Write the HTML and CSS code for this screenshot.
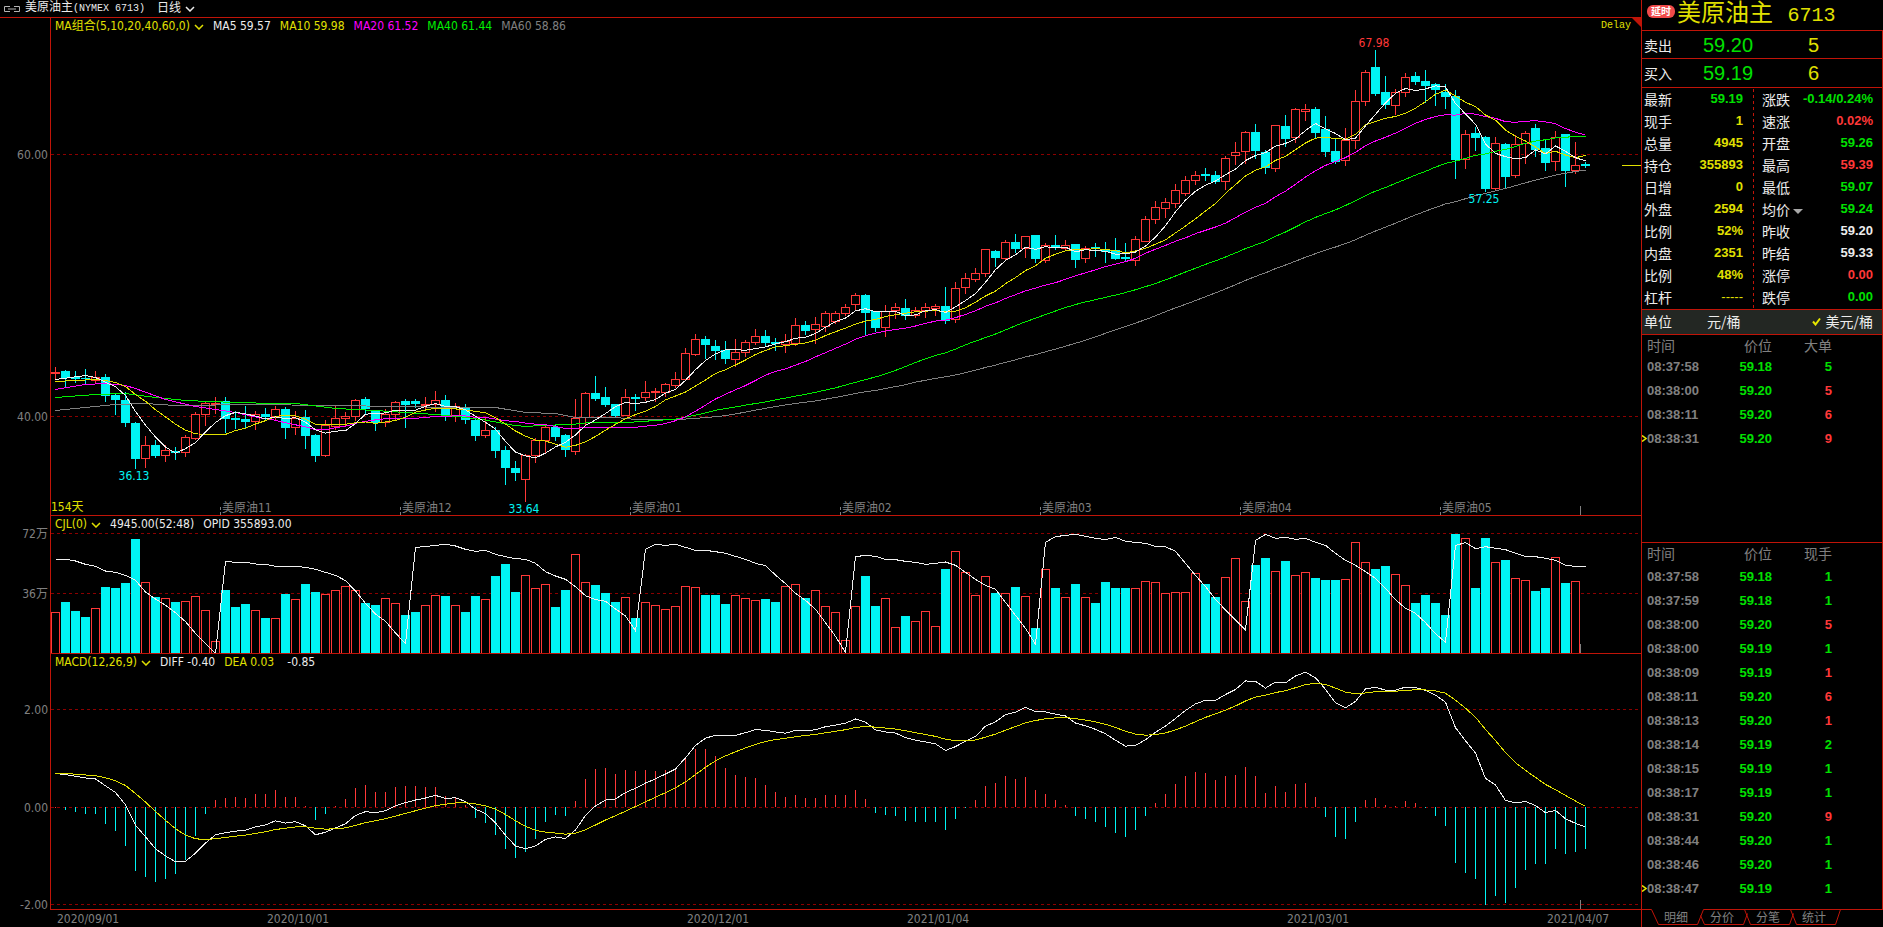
FILE: index.html
```html
<!DOCTYPE html>
<html lang="zh-CN">
<head>
<meta charset="utf-8">
<title>美原油主 6713</title>
<link rel="stylesheet" href="styles.css">
</head>
<body>
<div class="app">
  <main class="chart">
    <header class="topbar">
      <svg class="link-icon" viewBox="0 0 16 6" width="16" height="6"><path d="M6 .5H.5v5H6M10 .5h5.5v5H10M4 3h8" fill="none" stroke="#b4b4b4"/></svg>
      <span>美原油主<span class="mono">(NYMEX 6713)</span></span>
      <button class="period" type="button">日线<svg class="chev" viewBox="0 0 10 6" width="10" height="6"><path d="M1 1l4 4 4-4"/></svg></button>
    </header>
    <section class="pane pane-price">
      <div class="axis" id="axis-price"></div>
      <div class="plot">
        <svg class="drawing" id="price" viewBox="51 18 1590 497" preserveAspectRatio="none"></svg>
        <div class="legend">
          <button type="button" class="yellow">MA组合(5,10,20,40,60,0)<svg class="chev" viewBox="0 0 10 6" width="10" height="6"><path d="M1 1l4 4 4-4"/></svg></button>
          <span class="white">MA5 59.57</span><span class="yellow">MA10 59.98</span><span class="magenta">MA20 61.52</span><span class="lime">MA40 61.44</span><span class="gray">MA60 58.86</span>
        </div>
        <span class="delay mono">Delay</span>
        <span class="corner"></span>
        <span class="days">154天</span>
        <div id="price-notes"></div>
      </div>
    </section>
    <section class="pane pane-volume">
      <div class="axis" id="axis-volume"></div>
      <div class="plot">
        <svg class="drawing" id="volume" viewBox="51 516 1590 137" preserveAspectRatio="none"></svg>
        <div class="legend">
          <button type="button" class="yellow">CJL(0)<svg class="chev" viewBox="0 0 10 6" width="10" height="6"><path d="M1 1l4 4 4-4"/></svg></button>
          <span class="white">4945.00(52:48)</span><span class="white">OPID 355893.00</span>
        </div>
      </div>
    </section>
    <section class="pane pane-macd">
      <div class="axis" id="axis-macd"></div>
      <div class="plot">
        <svg class="drawing" id="macd" viewBox="51 654 1590 255" preserveAspectRatio="none"></svg>
        <div class="legend">
          <button type="button" class="yellow">MACD(12,26,9)<svg class="chev" viewBox="0 0 10 6" width="10" height="6"><path d="M1 1l4 4 4-4"/></svg></button>
          <span class="white">DIFF -0.40</span><span class="yellow">DEA 0.03</span><span class="white last">-0.85</span>
        </div>
      </div>
    </section>
    <footer class="dates"><div class="date-track" id="dates"></div></footer>
  </main>

  <aside class="quote">
    <h1 class="title"><span class="badge">延时</span><span>美原油主 <span class="code">6713</span></span></h1>
    <div class="quote-body">
      <div class="order"><span>卖出</span><b class="green">59.20</b><b class="yellow">5</b></div>
      <div class="order"><span>买入</span><b class="green">59.19</b><b class="yellow">6</b></div>
      <div class="stats">
        <dl>
          <div><dt>最新</dt><dd class="green">59.19</dd></div>
          <div><dt>现手</dt><dd class="yellow">1</dd></div>
          <div><dt>总量</dt><dd class="yellow">4945</dd></div>
          <div><dt>持仓</dt><dd class="yellow">355893</dd></div>
          <div><dt>日增</dt><dd class="yellow">0</dd></div>
          <div><dt>外盘</dt><dd class="yellow">2594</dd></div>
          <div><dt>比例</dt><dd class="yellow">52%</dd></div>
          <div><dt>内盘</dt><dd class="yellow">2351</dd></div>
          <div><dt>比例</dt><dd class="yellow">48%</dd></div>
          <div><dt>杠杆</dt><dd class="yellow plain">-----</dd></div>
        </dl>
        <dl>
          <div><dt>涨跌</dt><dd class="green">-0.14/0.24%</dd></div>
          <div><dt>速涨</dt><dd class="red">0.02%</dd></div>
          <div><dt>开盘</dt><dd class="green">59.26</dd></div>
          <div><dt>最高</dt><dd class="red">59.39</dd></div>
          <div><dt>最低</dt><dd class="green">59.07</dd></div>
          <div><dt><button type="button" class="avg">均价<i class="caret"></i></button></dt><dd class="green">59.24</dd></div>
          <div><dt>昨收</dt><dd class="white">59.20</dd></div>
          <div><dt>昨结</dt><dd class="white">59.33</dd></div>
          <div><dt>涨停</dt><dd class="red">0.00</dd></div>
          <div><dt>跌停</dt><dd class="green">0.00</dd></div>
        </dl>
      </div>
      <div class="unit">
        <span>单位</span>
        <button type="button" class="unit-cny">元/桶</button>
        <button type="button" class="unit-usd" aria-pressed="true"><svg viewBox="0 0 9 9" width="9" height="9"><path d="M1 4.500l2.500 3L8 1.500" fill="none" stroke="#e6e600" stroke-width="2"/></svg>美元/桶</button>
      </div>
      <div class="ticks ticks-big">
        <table>
          <thead><tr><th>时间</th><th>价位</th><th>大单</th></tr></thead>
          <tbody id="big"></tbody>
        </table>
      </div>
      <div class="ticks ticks-all">
        <table>
          <thead><tr><th>时间</th><th>价位</th><th>现手</th></tr></thead>
          <tbody id="all"></tbody>
        </table>
      </div>
    </div>
    <nav class="tabs">
      <svg class="tab-lines" viewBox="0 0 241 18" width="241" height="18"><path d="M0 .5H9.500L16.500 15.500H55.500L61.500 .5H241M58.500 6.500L62.500 15.500H101.500L105.500 4.500M102.500 .5L108.500 15.500H147.500L151.500 4.500M148.500 .5L154.500 15.500H193.500L198.500 .5" fill="none" stroke="#c01408"/></svg>
      <button type="button">明细</button><button type="button">分价</button><button type="button">分笔</button><button type="button">统计</button>
    </nav>
  </aside>
</div>
<script src="chart.js"></script>
</body>
</html>
```

FILE: styles.css
```css
* { box-sizing: border-box; }

:root {
  --line: #c01408;
  --grid: #8c0000;
  --red: #ff3838;
  --green: #00e000;
  --yellow: #e0e000;
  --cyan: #00f4f4;
  --white: #ececec;
  --gray: #808080;
  --ui: "DejaVu Sans Condensed", "Noto Sans CJK SC", sans-serif;
  --cjk: "Noto Sans CJK SC", sans-serif;
  --mono: "Liberation Mono", "Noto Sans CJK SC", monospace;
  --num: "Liberation Sans", "Noto Sans CJK SC", sans-serif;
}

body {
  margin: 0;
  background: #000;
  color: var(--white);
  font: 12px/16px var(--ui);
}

button {
  margin: 0;
  padding: 0;
  border: 0;
  background: none;
  color: inherit;
  font: inherit;
  cursor: pointer;
}

.mono { font-family: var(--mono); }
.red { color: var(--red); }
.green { color: var(--green); }
.yellow { color: var(--yellow); }
.cyan { color: var(--cyan); }
.white { color: var(--white); }
.gray { color: var(--gray); }
.magenta { color: #ff00ff; }
.lime { color: #00f000; }

.app {
  display: grid;
  grid-template-columns: minmax(0, 1fr) 242px;
  height: 100vh;
  overflow: hidden;
  white-space: nowrap;
}

/* chart column */
.chart { display: flex; flex-direction: column; min-height: 0; }

.topbar {
  flex: none;
  display: flex;
  align-items: center;
  height: 18px;
  padding-left: 4px;
  border-bottom: 1px solid var(--line);
  font-family: var(--mono);
}
.topbar .mono { font-size: 10px; }
.link-icon { margin-right: 5px; }
.period { margin-left: 12px; }

.chev { margin-left: 4px; fill: none; stroke: currentColor; stroke-width: 1.5; }

.pane { display: grid; grid-template-columns: 50px minmax(0, 1fr); min-height: 0; }
.pane-price { flex: 498 1 0; }
.pane-volume { flex: 138 1 0; }
.pane-macd { flex: 256 1 0; }

.axis { position: relative; color: var(--gray); }
.axis span { position: absolute; right: 2px; margin-top: -7px; }

.plot {
  position: relative;
  min-height: 0;
  border-left: 1px solid var(--line);
  border-bottom: 1px solid var(--line);
}
.drawing {
  position: absolute;
  inset: 0;
  width: 100%;
  height: 100%;
  shape-rendering: crispEdges;
}
.drawing * { vector-effect: non-scaling-stroke; }
.drawing polyline, .drawing path { fill: none; }
.grid { stroke: var(--grid); stroke-dasharray: 3 3; }
.up { stroke: var(--red); fill: #000; }
.down { fill: var(--cyan); }
.down-wick { stroke: var(--cyan); }
.l-white { stroke: #f0f0f0; }
.l-yellow { stroke: var(--yellow); }
.l-magenta { stroke: #ff00ff; }
.l-green { stroke: #00f000; }
.l-gray { stroke: var(--gray); }

.legend { position: relative; display: flex; gap: 9px; padding-left: 4px; }
.legend .last { padding-left: 4px; }
.delay { position: absolute; top: 0; right: 10px; color: var(--yellow); font-size: 10px; }
.corner {
  position: absolute;
  top: 0;
  right: 0;
  width: 9px;
  height: 9px;
  background: var(--line);
  clip-path: polygon(0 0, 100% 0, 100% 100%);
}
.days { position: absolute; left: 0; bottom: 0; color: var(--yellow); }
.note { position: absolute; margin-top: -8px; }
.note-center { transform: translateX(-50%); }

.dates { flex: none; height: 17px; padding-left: 51px; color: var(--gray); }
.date-track { position: relative; height: 17px; }
.date-track span { position: absolute; top: 1px; }

/* quote column */
.quote { display: flex; flex-direction: column; min-height: 0; border-left: 1px solid var(--line); }

.title {
  flex: none;
  display: flex;
  align-items: center;
  gap: 2px;
  height: 30px;
  margin: 0;
  padding-left: 5px;
  color: var(--yellow);
  font: 24px/30px var(--mono);
}
.code { font-size: 20px; }
.badge {
  width: 28px;
  height: 13px;
  margin-bottom: 8px;
  border-radius: 6px;
  background: #f04a4a;
  color: #fff;
  font: bold 10px/13px var(--num);
  text-align: center;
}

.quote-body {
  flex: 1;
  display: flex;
  flex-direction: column;
  min-height: 0;
  border-right: 1px solid var(--line);
  font: 14px/20px var(--cjk);
}
.order {
  display: grid;
  grid-template-columns: 59px 1fr 74px;
  align-items: center;
  height: 28px;
  padding-left: 2px;
  border-top: 1px solid var(--line);
}
.order + .order { height: 29px; }
.order b { font: 20px/22px "Liberation Sans", sans-serif; }

.stats { display: grid; grid-template-columns: 111px 1fr; border-top: 1px solid var(--line); padding-top: 1px; }
.stats dl { margin: 0; padding: 0 10px 0 2px; }
.stats dl + dl {
  padding: 0 9px 0 9px;
  background: repeating-linear-gradient(var(--line) 0 3px, transparent 3px 6px) left top / 1px 100% no-repeat;
}
.stats dl > div { display: flex; justify-content: space-between; height: 22px; }
.stats dt, .stats dd { margin: 0; }
.stats dd { font: bold 13px/20px var(--num); }
.stats .plain { font-weight: normal; }
.avg { display: flex; align-items: center; gap: 3px; }
.caret { border: 5px solid transparent; border-top-color: #a8a8a8; border-bottom: 0; margin-top: 4px; }

.unit {
  display: flex;
  align-items: center;
  height: 25px;
  padding: 0 9px 2px 2px;
  border-top: 1px solid var(--line);
  background: #232723;
}
.unit-cny { margin-left: 35px; }
.unit-usd { display: flex; align-items: center; gap: 5px; margin-left: auto; }

.ticks { border-top: 1px solid var(--line); min-height: 0; overflow: hidden; }
.ticks-big { flex: 208 1 0; }
.ticks-all { flex: 367 1 0; }
.ticks table { width: 100%; border-collapse: collapse; table-layout: fixed; }
.ticks th, .ticks td { padding: 0; text-align: right; vertical-align: top; }
.ticks th { height: 20px; color: var(--gray); font-weight: normal; line-height: 20px; }
.ticks-all th { height: 22px; }
.ticks td { height: 24px; font: bold 13px/23px var(--num); }
.ticks th:nth-child(1) { width: 65px; padding-left: 5px; text-align: left; }
.ticks th:nth-child(2) { width: 65px; }
.ticks th:nth-child(3) { padding-right: 50px; }
.ticks td:nth-child(1) { position: relative; padding-left: 5px; color: var(--gray); text-align: left; }
.ticks td:nth-child(3) { padding-right: 50px; }
.mark { position: absolute; left: 0; top: 8px; }

.tabs { position: relative; flex: none; display: flex; height: 18px; padding-left: 11px; }
.tab-lines { position: absolute; left: 0; top: 0; }
.tabs button { position: relative; width: 46px; color: var(--gray); font: 12px/16px var(--num); }
```

FILE: chart.js
```javascript
// One row per day: direction (r up, c down), then high, body top, body bottom, low.
const days = `
r367,372,373,378 c370,371,378,386 c371,377,379,382 c369,378,379,384 r371,377,380,382 c374,377,396,401 c393,395,400,414 c392,400,423,426 c422,423,459,468 r436,445,458,467
c440,445,456,457 r445,450,455,461 c447,451,453,459 r435,437,452,456 r412,414,438,439 r401,403,414,425 r397,403,404,413 c397,401,419,432 c411,418,420,428 c406,419,422,427
r411,414,421,429 c408,414,417,420 r406,409,416,419 c407,409,428,438 r411,418,427,434 c410,417,436,448 c434,435,456,461 r420,425,455,456 r406,418,426,429 r412,416,418,426
r399,400,416,420 c397,399,409,413 c410,410,423,430 r409,414,422,426 r401,402,414,420 c399,401,405,427 c399,401,404,407 r397,404,405,409 r391,400,404,411 c395,400,417,420
r403,406,415,421 c404,407,420,423 c419,420,436,440 r418,430,435,437 c427,430,451,457 c446,450,468,484 c461,468,473,480 r454,455,479,501 r438,440,455,462 r425,427,440,452
c425,427,437,440 c434,435,450,456 r399,418,451,454 r392,393,417,425 c376,393,399,400 c387,397,405,406 c404,404,416,416 r389,397,415,415 c394,397,399,410 r381,392,397,400
r388,391,392,401 r383,384,392,396 r372,379,385,387 r348,353,379,380 r334,339,354,355 c336,339,345,358 c340,346,351,359 c341,350,359,363 r339,352,359,366 r340,342,352,356
r329,336,342,344 c330,336,343,346 c338,342,344,350 r334,341,344,352 r318,325,343,345 c321,325,331,334 r317,324,329,343 r311,313,326,331 r311,313,321,323 r304,307,313,315
r293,295,304,309 c294,295,313,335 c311,311,328,331 r305,311,327,336 r303,307,310,318 c299,308,316,319 r307,310,315,317 r303,307,310,317 r304,306,308,315 c287,306,321,323
r282,288,319,322 r273,278,287,293 r268,273,279,281 r249,249,273,276 c250,251,258,266 r240,242,258,259 c234,242,249,252 r236,236,248,257 c235,235,259,262 r243,245,260,262
c235,245,248,249 r240,245,248,250 c244,244,260,267 r246,248,258,262 c243,247,249,256 c242,250,252,262 c238,250,259,259 c243,257,259,261 r236,239,260,265 r216,219,241,241
r201,207,219,223 r198,202,208,217 r184,190,203,207 r176,180,193,195 r171,175,180,184 c168,174,176,180 c171,175,182,183 r156,158,181,189 r142,152,155,164 r131,132,151,163
c124,132,151,158 c150,152,168,173 r125,125,168,171 c115,126,139,146 r108,109,137,142 r104,109,111,120 c107,109,133,137 c116,129,152,156 c138,151,162,163 r128,140,160,165
r90,101,140,148 r70,72,101,105 c50,67,94,95 c76,92,105,108 r89,92,105,114 r73,77,92,96 c72,76,82,84 c70,81,86,102 c83,84,90,105 c84,92,97,108
c90,96,160,178 r130,134,159,168 c127,133,138,150 c136,137,189,191 r137,143,188,190 c143,144,177,188 r135,144,175,177 r131,133,143,163 c124,128,150,156 c140,148,163,170
r131,137,161,170 c134,134,171,186 r142,165,170,173 c162,164,166,167`.trim().split(/\s+/).map(s => {
  const [high, top, bottom, low] = s.slice(1).split(',').map(Number);
  return { up: s[0] === 'r', high, top, bottom, low, close: s[0] === 'r' ? top : bottom };
});

// Daily volume, in units of 10 000 lots.
const volumes = [24.6,30.8,25.4,21.8,27,39.8,39.2,42.2,68.6,42.6,33.8,33,30.8,31.2,34.2,25.8,7.2,38,27.8,29.6,25.8,21.2,21,35.6,32.4,41.6,36.8,35.4,37.8,40.2,37.8,30.2,29,33,30,23,24.8,28.8,34.8,34.4,28.8,24.8,34.4,32.4,46.4,53.6,36.8,46.8,39,41.4,27.8,38,59.4,42.6,41,36.2,30.8,33.6,21.2,30.6,28.8,26.4,28.2,40.2,39.6,35,35,29.6,34.8,33,31.8,32.6,30.8,40.2,41.4,33.2,37.8,28.2,24.6,7.8,28.2,46.4,28.4,33,15.6,22.4,19.2,25.2,16.2,50.6,61.2,48.6,34.8,46.2,36.2,36,39.8,34.2,15.2,50.4,39.2,33.6,41.6,33.6,30.2,42.8,39.2,39.2,39,43.2,42.6,36,36.6,36.6,48,41.6,33.8,45.6,57,31.2,53,57.2,49.2,55.4,46.8,48.6,45.2,44,44,44.4,66.6,54.6,50.6,52.4,47.4,40.8,30.2,35,30.2,23,71.6,69,39.2,69.2,54.6,56,45,43.8,37.4,39.2,57.6,42.2,43.2,0];

// Open interest, measured down from the top of its scale in thirds of a unit.
const interest = [208,208,213,223,229,243,247,256,271,306,327,346,368,395,430,460,490,214,217,217,222,223,229,229,229,232,238,247,256,272,303,340,372,394,429,461,172,170,166,163,168,178,184,181,193,200,206,208,220,245,258,268,290,317,329,334,357,378,422,178,163,166,163,172,181,181,185,190,199,208,220,227,255,281,310,331,358,398,439,487,200,196,199,208,209,214,217,223,220,216,226,247,268,286,298,337,376,415,463,157,140,136,133,139,145,149,142,154,157,160,169,170,184,220,256,290,328,360,390,420,151,133,145,142,148,145,157,166,190,211,226,245,265,295,329,355,370,398,431,457,166,158,176,170,175,179,190,199,200,205,211,226,229,229];

// Averages for the days before a full window of closes is available.
const averages = [
  { n: 60, cls: 'l-gray', seed: [[0,410],[3,407],[6,404],[9,403],[12,405],[20,404],[27,405],[35,406],[39,407],[44,407],[47,412],[50,413],[52,417],[56,417],[58,419]] },
  { n: 40, cls: 'l-green', seed: [[0,397],[4,394],[7,393],[10,397],[13,400],[18,402],[22,403],[24,403],[28,408],[32,410],[38,414]] },
  { n: 20, cls: 'l-magenta', seed: [[0,389],[3,384],[5,383],[6,384],[7,385],[8,388],[11,399],[14,406],[18,412]] },
  { n: 10, cls: 'l-yellow', seed: [[0,381],[4,379],[5,380],[6,382],[7,386],[8,394]] },
  { n: 5, cls: 'l-white', seed: [[0,379],[3,375]] }
];

const X = i => 55.5 + 10 * i;
const el = (parent, name, attrs) => {
  const node = document.createElementNS('http://www.w3.org/2000/svg', name);
  for (const key in attrs) node.setAttribute(key, attrs[key]);
  parent.appendChild(node);
};
const line = (svg, cls, x1, y1, x2, y2) => el(svg, 'line', { class: cls, x1, y1, x2, y2 });
const poly = (svg, cls, pts) => el(svg, 'polyline', { class: cls, points: pts.map(p => p.join(',')).join(' ') });
const span = (parent, cls, text, style) => {
  const node = document.createElement('span');
  node.className = cls;
  node.textContent = text;
  Object.assign(node.style, style);
  parent.appendChild(node);
};
const byId = id => document.getElementById(id);
const pctX = x => (x - 51) / 15.9 + '%';

function bar(svg, i, up, top, bottom) {
  if (up) el(svg, 'rect', { class: 'up', x: X(i) - 4, y: top + 0.5, width: 8, height: bottom - top });
  else el(svg, 'rect', { class: 'down', x: X(i) - 4.5, y: top, width: 9, height: Math.max(1, bottom - top) });
}
function scale(name, y0, h, rows) {
  rows.forEach(([text, y]) => {
    line(byId(name), 'grid', 51, y + 0.5, 1641, y + 0.5);
    span(byId('axis-' + name), '', text, { top: (y - y0) / h * 100 + '%' });
  });
}

scale('price', 18, 498, [['60.00', 154], ['40.00', 416]]);
scale('volume', 516, 138, [['72万', 533], ['36万', 593]]);
scale('macd', 654, 256, [['2.00', 709], ['0.00', 807], ['-2.00', 904]]);

// Price
const price = byId('price');
days.forEach((d, i) => {
  line(price, d.up ? 'up' : 'down-wick', X(i), d.high, X(i), d.low + 1);
  bar(price, i, d.up, d.top, d.bottom);
});
averages.forEach(({ n, cls, seed }) => {
  const pts = seed.map(([i, y]) => [X(i), y + 0.5]);
  for (let i = n - 1; i < days.length; i++) {
    const sum = days.slice(i - n + 1, i + 1).reduce((s, d) => s + d.close, 0);
    pts.push([X(i), sum / n + 0.5]);
  }
  poly(price, cls, pts);
});
line(price, 'l-yellow', 1622, 165.5, 1641, 165.5);
line(price, 'l-gray', 1580.5, 506, 1580.5, 515);

const notes = byId('price-notes');
const pctY = y => (y - 18) / 4.97 + '%';
[['36.13', 134, 476, 'cyan'], ['33.64', 524, 509, 'cyan'], ['67.98', 1374, 43, 'red'], ['57.25', 1484, 199, 'cyan']]
  .forEach(([text, x, y, cls]) => span(notes, 'note note-center ' + cls, text, { left: pctX(x), top: pctY(y) }));
[['11', 220], ['12', 400], ['01', 630], ['02', 840], ['03', 1040], ['04', 1240], ['05', 1440]].forEach(([m, x]) => {
  line(price, 'l-gray', x + 0.5, 507, x + 0.5, 510);
  line(price, 'l-gray', x + 0.5, 512, x + 0.5, 515);
  span(notes, 'note gray', '美原油' + m, { left: pctX(x + 2), top: pctY(508) });
});

// Volume and open interest
const volume = byId('volume');
volumes.forEach((v, i) => { if (v) bar(volume, i, days[i].up, Math.round(653 - v * 5 / 3), 653); });
poly(volume, 'l-white', interest.map((v, i) => [X(i), 490 + v / 3]));
line(volume, 'l-gray', 1580.5, 644, 1580.5, 653);

// MACD
const macd = byId('macd');
const toPrice = y => 60 - (y - 154.3) / 13.1;
let slow = 41.9, fast = 42.6, dea = 0.7;
const diffs = [], deas = [];
days.forEach((d, i) => {
  const c = toPrice(d.close);
  if (i) {
    fast += (c - fast) * 2 / 13;
    slow += (c - slow) * 2 / 27;
    dea += (fast - slow - dea) * 0.2;
  }
  diffs.push(fast - slow);
  deas.push(dea);
});
const M = v => 807.5 - v * 48.75;
diffs.forEach((v, i) => {
  const h = 2 * (v - deas[i]);
  line(macd, h > 0 ? 'up' : 'down-wick', X(i), 807, X(i), h > 0 ? M(h) : Math.max(808, M(h)));
});
poly(macd, 'l-white', diffs.map((v, i) => [X(i), M(v)]));
poly(macd, 'l-yellow', deas.map((v, i) => [X(i), M(v)]));
line(macd, 'l-gray', 1580.5, 900, 1580.5, 909);

[['2020/09/01', 57], ['2020/10/01', 267], ['2020/12/01', 687], ['2021/01/04', 907], ['2021/03/01', 1287], ['2021/04/07', 1547]]
  .forEach(([text, x]) => span(byId('dates'), '', text, { left: pctX(x) }));

// Trades: time, price, lots, colour of the lots
const rows = (id, list) => {
  byId(id).innerHTML = list.map(([t, p, n, cls], i) =>
    `<tr><td>${i === list.length - 1 ? '<svg class="mark" viewBox="0 0 5 7" width="5" height="7"><path d="M0 .5l4 3-4 3" fill="none" stroke="#e6e600" stroke-width="1.500"/></svg>' : ''}${t}</td><td class="green">${p}</td><td class="${cls}">${n}</td></tr>`).join('');
};
rows('big', [['08:37:58','59.18',5,'green'],['08:38:00','59.20',5,'red'],['08:38:11','59.20',6,'red'],['08:38:31','59.20',9,'red']]);
rows('all', [['08:37:58','59.18',1,'green'],['08:37:59','59.18',1,'green'],['08:38:00','59.20',5,'red'],['08:38:00','59.19',1,'green'],['08:38:09','59.19',1,'red'],['08:38:11','59.20',6,'red'],['08:38:13','59.20',1,'red'],['08:38:14','59.19',2,'green'],['08:38:15','59.19',1,'green'],['08:38:17','59.19',1,'green'],['08:38:31','59.20',9,'red'],['08:38:44','59.20',1,'green'],['08:38:46','59.20',1,'green'],['08:38:47','59.19',1,'green']]);
```
